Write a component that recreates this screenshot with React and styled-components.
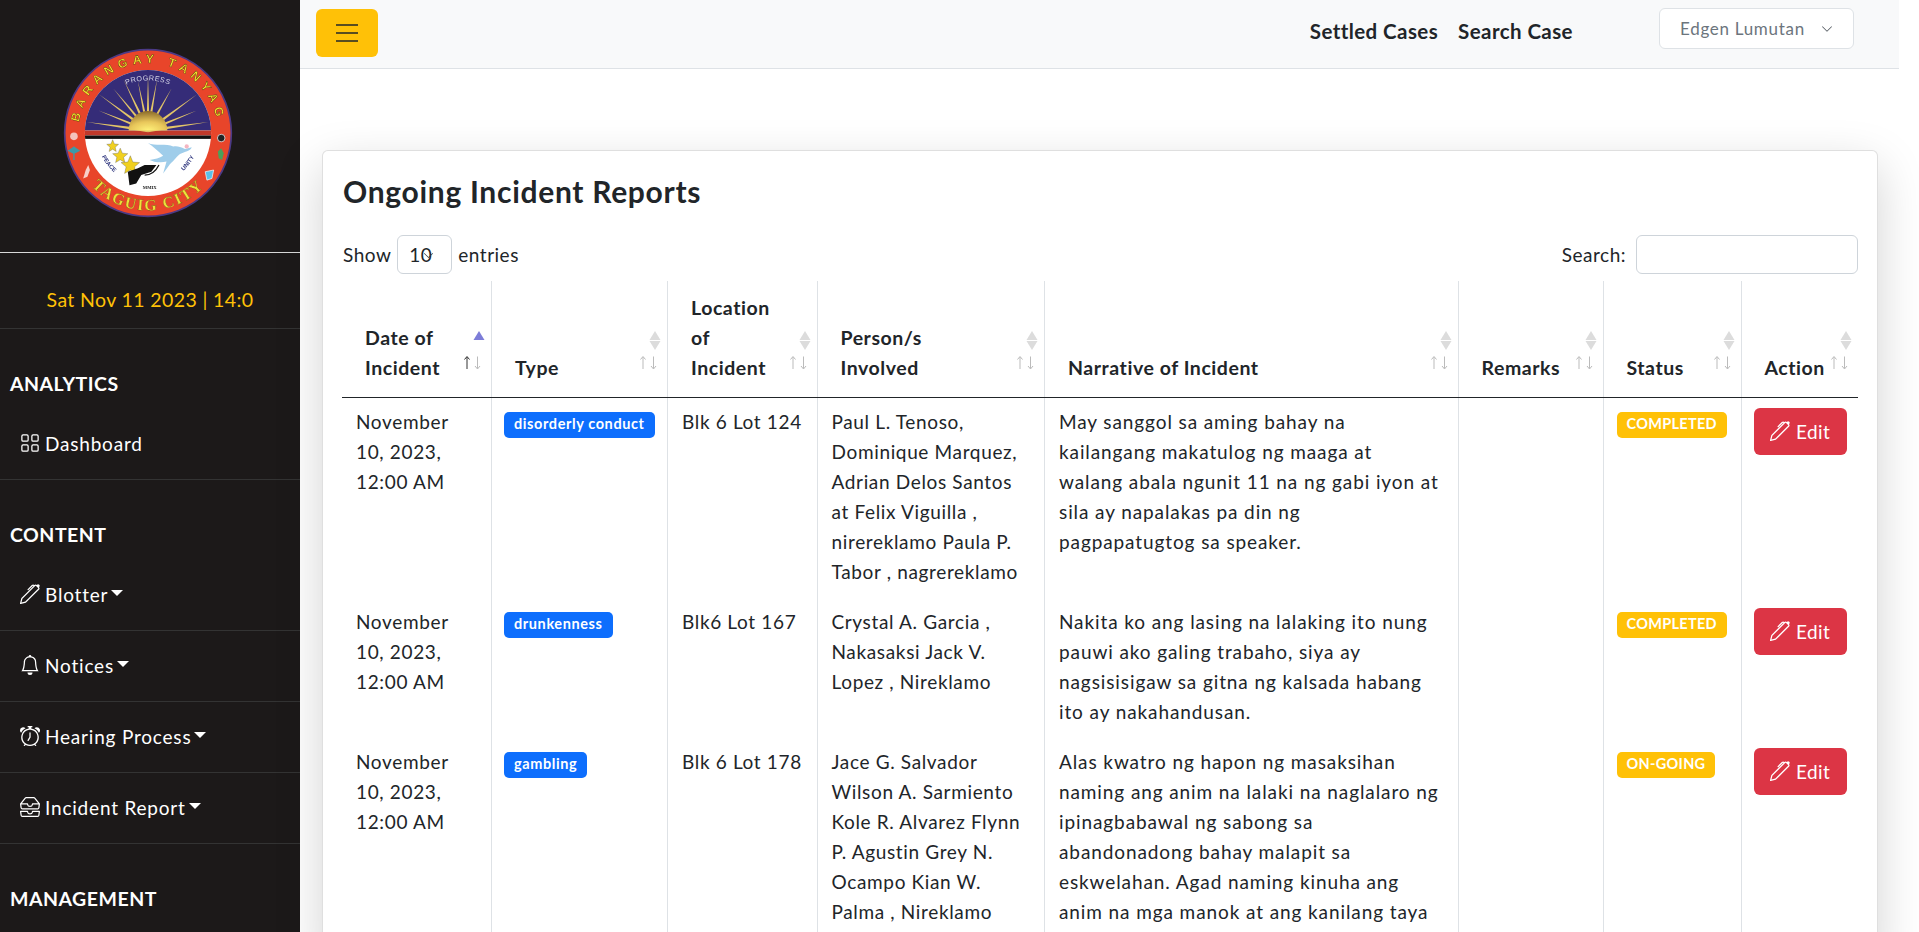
import React from 'react';
import styled, { createGlobalStyle } from 'styled-components';
import { BsGrid, BsPen, BsBell, BsAlarm, BsInboxes, BsChevronDown } from 'react-icons/bs';

const FONT = '"Lato", "Noto Sans", sans-serif';

const GlobalStyle = createGlobalStyle`
    html, body {
        margin: 0;
        height: 100%;
        overflow: hidden;
        background: #fff;
    }
    body {
        font-family: ${FONT};
        font-size: 19px;
        color: #212529;
    }
    * { box-sizing: border-box; }
`;

const Shell = styled.div`
    display: flex;
    height: 932px;
    padding-right: 20px;
    overflow: hidden;
`;

const Sidebar = styled.aside`
    flex: 0 0 300px;
    background: #1c1919;
    color: #fff;
`;

const LogoBlock = styled.div`
    height: 253px;
    padding: 13px 5px 0 0;
    display: flex;
    align-items: center;
    justify-content: center;
    border-bottom: 1px solid #d8d8d8;
`;

const Clock = styled.div`
    height: 76px;
    display: flex;
    align-items: center;
    justify-content: center;
    color: #ffc107;
    font-size: 19.5px;
    letter-spacing: 0.38px;
    padding-top: 17px;
    border-bottom: 1px solid #333;
`;

const SectionTitle = styled.div`
    padding: 43px 0 13px 10px;
    line-height: 24px;
    font-size: 19.5px;
    font-weight: 700;
    letter-spacing: 0.5px;
    text-transform: uppercase;
`;

const NavItem = styled.div`
    height: 71px;
    display: flex;
    align-items: center;
    padding: 0 0 2px 20px;
    gap: 5px;
    font-size: 19px;
    letter-spacing: 0.8px;
    border-bottom: 1px solid #333;
    & svg { font-size: 20px; flex: none; }
`;

const Caret = styled.span`
    width: 0;
    height: 0;
    margin: 0 0 2px -2px;
    border-left: 6px solid transparent;
    border-right: 6px solid transparent;
    border-top: 6px solid #fff;
`;

const Main = styled.main`
    flex: 1;
    min-width: 0;
`;

const Topbar = styled.header`
    height: 69px;
    padding: 9px 45px 0 16px;
    display: flex;
    align-items: flex-start;
    background: #f8f9fa;
    border-bottom: 1px solid #dee2e6;
`;

const Toggler = styled.button`
    width: 62px;
    height: 48px;
    padding: 0;
    border: none;
    border-radius: 6px;
    background: #ffc107;
    display: flex;
    align-items: center;
    justify-content: center;
`;

const TopLinks = styled.nav`
    margin: -2px 0 0 auto;
    display: flex;
    gap: 20px;
    height: 48px;
    align-items: center;
    font-size: 20.5px;
    font-weight: 700;
    letter-spacing: 0.42px;
`;

const UserMenu = styled.div`
    width: 195px;
    height: 41px;
    margin: -1px 0 0 86px;
    padding: 0 20px;
    display: flex;
    align-items: center;
    justify-content: space-between;
    background: #fff;
    border: 1px solid #dee2e6;
    border-radius: 6px;
    color: #6c757d;
    font-size: 17px;
    letter-spacing: 0.7px;
    & svg { font-size: 12px; color: #495057; }
`;

const Content = styled.div`
    padding: 81px 21px 0 22px;
`;

const Card = styled.section`
    padding: 19px 20px 20px;
    background: #fff;
    border: 1px solid rgba(0, 0, 0, 0.125);
    border-radius: 6px;
    box-shadow: 0 1rem 3rem rgba(0, 0, 0, 0.175);
`;

const Title = styled.h3`
    margin: 0 0 23px;
    font-size: 30px;
    line-height: 42px;
    font-weight: 700;
    letter-spacing: 0.7px;
`;

const Controls = styled.div`
    display: flex;
    justify-content: space-between;
    align-items: center;
    height: 39px;
    margin: 0 -1px 7px 0;
    letter-spacing: 0.5px;
`;

const ControlGroup = styled.label`
    display: flex;
    align-items: center;
    gap: ${props => props.$gap}px;
`;

const Select = styled.div`
    position: relative;
    width: 55px;
    height: 39px;
    padding-left: 11px;
    display: flex;
    align-items: center;
    border: 1px solid #ced4da;
    border-radius: 6px;
    & svg {
        position: absolute;
        left: 25px;
        top: 14px;
        font-size: 11px;
        color: #343a40;
    }
`;

const SearchInput = styled.input`
    width: 222px;
    height: 39px;
    border: 1px solid #ced4da;
    border-radius: 6px;
    background: #fff;
`;

const Table = styled.table`
    width: 1516px;
    margin-left: -1px;
    table-layout: fixed;
    border-collapse: collapse;
`;

const Th = styled.th`
    position: relative;
    height: 116px;
    padding: 10px 26px 14px 23px;
    vertical-align: bottom;
    text-align: left;
    font-size: 19.5px;
    font-weight: 700;
    line-height: 30px;
    letter-spacing: 0.55px;
    border-bottom: 1px solid #212529;
    border-right: 1px solid #dee2e6;
    &:last-child { border-right: none; }
`;

const Td = styled.td`
    padding: 9px 10px 11px 14px;
    vertical-align: top;
    line-height: 30px;
    font-size: 19px;
    letter-spacing: 0.65px;
    white-space: nowrap;
    border-right: 1px solid #dee2e6;
    &:last-child { border-right: none; padding-left: 12px; }
`;

const StoryCell = styled(Td)`
    letter-spacing: 0.9px;
`;

const Badge = styled.span`
    display: inline-block;
    margin: 5px 0 0 -1px;
    height: 26px;
    padding: 0 10px;
    line-height: 24px;
    vertical-align: top;
    border-radius: 5px;
    color: #fff;
    font-size: 14.5px;
    font-weight: 700;
    letter-spacing: 0.3px;
    background: #ffc107;
`;

const TypeBadge = styled(Badge)`
    margin-left: -2px;
    letter-spacing: 0.6px;
    background: #0d6efd;
`;

const EditButton = styled.button`
    width: 93px;
    height: 47px;
    margin-top: 1px;
    padding: 0;
    display: flex;
    align-items: center;
    justify-content: center;
    gap: 6px;
    border: none;
    border-radius: 6px;
    background: #dc3545;
    color: #fff;
    font-family: ${FONT};
    font-size: 19px;
    letter-spacing: 0.4px;
    & svg { font-size: 20px; }
`;

const SortMark = styled.svg`
    position: absolute;
    right: 1px;
    top: 49px;
`;

function SortIcon({ active }) {
    return (
        <SortMark width="32" height="42" viewBox="0 0 32 42">
            <path d="M21 1l5.500 9h-11z" fill={active ? '#7d7dd8' : '#dcdcdc'} />
            {!active && <path d="M21 20l5.500-9h-11z" fill="#dcdcdc" />}
            <path d="M9 39V27M6.500 29.500L9 26.500l2.500 3" stroke={active ? '#333' : '#bbb'} strokeWidth="1" fill="none" />
            <path d="M19.500 26.500v12M17 36l2.500 3 2.500-3" stroke="#bbb" strokeWidth="1" fill="none" />
        </SortMark>
    );
}

const RAY_TIPS = [
    [113, 252], [148, 218], [150, 170], [192, 152], [222, 125], [265, 130], [295, 112],
    [322, 125], [365, 152], [440, 170], [440, 218], [475, 252],
];

function Logo() {
    const rays = RAY_TIPS.map(([x, y]) => {
        const dx = (x - 295) / 2.5;
        const dy = (y - 277) / 2.5;
        const len = Math.hypot(dx, dy);
        const nx = (-dy / len) * 2;
        const ny = (dx / len) * 2;
        return `${dx},${dy - 3} ${nx},${ny - 3} ${-nx},${-ny - 3}`;
    });
    return (
        <svg width="170" height="170" viewBox="-101 -101 202 202" style={{ filter: 'blur(0.35px)' }}>
            <defs>
                <clipPath id="disc"><circle r="75" /></clipPath>
                <radialGradient id="sun" cx="50%" cy="100%" r="100%">
                    <stop offset="0%" stopColor="#fff27a" />
                    <stop offset="45%" stopColor="#e8c65a" />
                    <stop offset="100%" stopColor="#8a6a2a" />
                </radialGradient>
                <path id="topArc" d="M-81,18 A83,83 0 1 1 81,18" />
                <path id="progressArc" d="M-65,-8 A66,66 0 0 1 65,-8" />
                <path id="bottomArc" d="M-87,30 A92,92 0 0 0 87,30" />
                <path id="peaceArc" d="M-60,14 A62,62 0 0 0 -28,55" />
                <path id="unityArc" d="M30,54 A62,62 0 0 0 60,14" />
            </defs>
            <circle r="99" fill="#e8452a" stroke="#4b3a86" strokeWidth="2" />
            <circle r="75" fill="#fff" />
            <g clipPath="url(#disc)">
                <rect x="-76" y="-76" width="152" height="73" fill="#352c78" />
                <rect x="-76" y="-3" width="152" height="6" fill="#c0392b" />
                <rect x="-76" y="3" width="152" height="4" fill="#111" />
                {rays.map((points, i) => <polygon key={i} points={points} fill="#e3c568" />)}
                <path d="M-23,-3 A23,23 0 0 1 23,-3 Z" fill="url(#sun)" />
            </g>
            <text fontFamily={'"Liberation Sans", sans-serif'} fontSize="14.500" fontWeight="700" fill="#f4e02b" stroke="#3a2a10" strokeWidth="0.4" letterSpacing="6">
                <textPath href="#topArc" startOffset="50%" textAnchor="middle">BARANGAY TANYAG</textPath>
            </text>
            <text fontFamily={'"Liberation Sans", sans-serif'} fontSize="8.500" fill="#d7d7e8" letterSpacing="0.600">
                <textPath href="#progressArc" startOffset="50%" textAnchor="middle">PROGRESS</textPath>
            </text>
            <text fontFamily={'"Liberation Serif", serif'} fontSize="19" fontWeight="700" fill="#ece23a" stroke="#6a4a10" strokeWidth="0.3" letterSpacing="2">
                <textPath href="#bottomArc" startOffset="50%" textAnchor="middle">TAGUIG CITY</textPath>
            </text>
            <text fontFamily={'"Liberation Sans", sans-serif'} fontSize="7" fontWeight="700" fill="#333a80">
                <textPath href="#peaceArc" startOffset="50%" textAnchor="middle">PEACE</textPath>
            </text>
            <text fontFamily={'"Liberation Sans", sans-serif'} fontSize="7" fontWeight="700" fill="#333a80">
                <textPath href="#unityArc" startOffset="50%" textAnchor="middle">UNITY</textPath>
            </text>
            <text x="2" y="66" textAnchor="middle" fontFamily={'"Liberation Serif", serif'} fontSize="5.500" fontWeight="700" fill="#222">MMIX</text>
            <path d="M-42,8l2,5 5,.500-4,3.500 1.200,5-4.200-2.800-4.200,2.800 1.200-5-4-3.500 5-.500z" fill="#f0d020" stroke="#555" strokeWidth="0.4" />
            <path d="M-33,18l2.500,6 6.500,.600-5,4.200 1.500,6.300-5.500-3.300-5.500,3.300 1.500-6.300-5-4.200 6.500-.600z" fill="#f0d020" stroke="#555" strokeWidth="0.4" />
            <path d="M-21,27l3,7.500 8,.700-6,5 1.800,7.800-6.800-4-6.800,4 1.800-7.800-6-5 8-.700z" fill="#f0d020" stroke="#555" strokeWidth="0.4" />
            <path d="M0,12 C8,16 22,12 30,16 C34,15 38,16 44,19 L52,17 C50,22 44,22 38,25 C32,30 30,34 26,37 L18,48 L22,34 C14,36 6,34 2,32 C8,31 14,30 18,27 C12,22 6,16 0,12 Z" fill="#9fcdea" />
            <circle cx="46" cy="16" r="2.500" fill="#f4b6c2" />
            <path d="M-22,62 L-24,46 L-12,42 L-4,38 L10,38 L4,46 L-8,50 L-14,60 Z" fill="#111" />
            <path d="M-4,50 C4,50 10,44 13,38" fill="none" stroke="#111" strokeWidth="1.500" />
            <circle cx="-88" cy="4" r="4.500" fill="#f4c4bc" />
            <path d="M-88,24 l6,-3 -6,-4 -6,4 z M-88,16 v16" fill="#3c9aa8" stroke="#3c9aa8" strokeWidth="1.500" />
            <path d="M-74,44 l3,-6 2,6 -3,8 -5,2z" fill="#f8d0c8" />
            <circle cx="87" cy="6" r="4.500" fill="#222" stroke="#ddd" strokeWidth="1" />
            <path d="M83,22 l4,-4 3,6 -2,8 -4,-2z" fill="#4aa05a" />
            <path d="M68,46 l10,-2 -2,10 -6,2z" fill="#5ac0e8" stroke="#fff" strokeWidth="0.8" />
        </svg>
    );
}

const COLUMNS = [
    { width: 149.5, label: <>Date of<br />Incident</>, active: true },
    { width: 176, label: 'Type' },
    { width: 149.5, label: <>Location<br />of<br />Incident</> },
    { width: 227.5, label: <>Person/s<br />Involved</> },
    { width: 413.5, label: 'Narrative of Incident' },
    { width: 145, label: 'Remarks' },
    { width: 138, label: 'Status' },
    { width: 117, label: 'Action' },
];

const ROWS = [
    {
        type: 'disorderly conduct',
        place: 'Blk 6 Lot 124',
        people: ['Paul L. Tenoso,', 'Dominique Marquez,', 'Adrian Delos Santos', 'at Felix Viguilla ,', 'nirereklamo Paula P.', 'Tabor , nagrereklamo'],
        story: ['May sanggol sa aming bahay na', 'kailangang makatulog ng maaga at', 'walang abala ngunit 11 na ng gabi iyon at', 'sila ay napalakas pa din ng', 'pagpapatugtog sa speaker.'],
        status: 'COMPLETED',
    },
    {
        type: 'drunkenness',
        place: 'Blk6 Lot 167',
        people: ['Crystal A. Garcia ,', 'Nakasaksi Jack V.', 'Lopez , Nireklamo'],
        story: ['Nakita ko ang lasing na lalaking ito nung', 'pauwi ako galing trabaho, siya ay', 'nagsisisigaw sa gitna ng kalsada habang', 'ito ay nakahandusan.'],
        status: 'COMPLETED',
    },
    {
        type: 'gambling',
        place: 'Blk 6 Lot 178',
        people: ['Jace G. Salvador', 'Wilson A. Sarmiento', 'Kole R. Alvarez Flynn', 'P. Agustin Grey N.', 'Ocampo Kian W.', 'Palma , Nireklamo'],
        story: ['Alas kwatro ng hapon ng masaksihan', 'naming ang anim na lalaki na naglalaro ng', 'ipinagbabawal ng sabong sa', 'abandonadong bahay malapit sa', 'eskwelahan. Agad naming kinuha ang', 'anim na mga manok at ang kanilang taya'],
        status: 'ON-GOING',
    },
];

function Lines({ items }) {
    return items.map((line, i) => <React.Fragment key={i}>{line}<br /></React.Fragment>);
}

export default function App() {
    return (
        <Shell>
            <GlobalStyle />
            <Sidebar>
                <LogoBlock><Logo /></LogoBlock>
                <Clock>Sat Nov 11 2023 | 14:0</Clock>
                <SectionTitle>Analytics</SectionTitle>
                <NavItem><BsGrid />Dashboard</NavItem>
                <SectionTitle>Content</SectionTitle>
                <NavItem><BsPen />Blotter<Caret /></NavItem>
                <NavItem><BsBell />Notices<Caret /></NavItem>
                <NavItem><BsAlarm />Hearing Process<Caret /></NavItem>
                <NavItem><BsInboxes />Incident Report<Caret /></NavItem>
                <SectionTitle>Management</SectionTitle>
            </Sidebar>
            <Main>
                <Topbar>
                    <Toggler aria-label="menu">
                        <svg width="30" height="30" viewBox="0 0 30 30">
                            <path d="M4 7h22M4 15h22M4 23h22" stroke="rgba(33,37,41,.75)" strokeWidth="2" fill="none" />
                        </svg>
                    </Toggler>
                    <TopLinks>
                        <span>Settled Cases</span>
                        <span>Search Case</span>
                    </TopLinks>
                    <UserMenu>Edgen Lumutan<BsChevronDown /></UserMenu>
                </Topbar>
                <Content>
                    <Card>
                        <Title>Ongoing Incident Reports</Title>
                        <Controls>
                            <ControlGroup $gap={6}>
                                Show
                                <Select>10<BsChevronDown /></Select>
                                entries
                            </ControlGroup>
                            <ControlGroup $gap={10}>
                                Search:
                                <SearchInput type="search" />
                            </ControlGroup>
                        </Controls>
                        <Table>
                            <colgroup>
                                {COLUMNS.map((col, i) => <col key={i} style={{ width: col.width }} />)}
                            </colgroup>
                            <thead>
                                <tr>
                                    {COLUMNS.map((col, i) => (
                                        <Th key={i}>{col.label}<SortIcon active={col.active} /></Th>
                                    ))}
                                </tr>
                            </thead>
                            <tbody>
                                {ROWS.map((row, i) => (
                                    <tr key={i}>
                                        <Td>November<br />10, 2023,<br />12:00 AM</Td>
                                        <Td><TypeBadge>{row.type}</TypeBadge></Td>
                                        <Td>{row.place}</Td>
                                        <Td><Lines items={row.people} /></Td>
                                        <StoryCell><Lines items={row.story} /></StoryCell>
                                        <Td />
                                        <Td><Badge>{row.status}</Badge></Td>
                                        <Td><EditButton><BsPen />Edit</EditButton></Td>
                                    </tr>
                                ))}
                            </tbody>
                        </Table>
                    </Card>
                </Content>
            </Main>
        </Shell>
    );
}
